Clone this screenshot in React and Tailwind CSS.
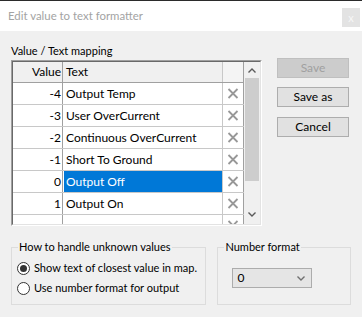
import React from "react";

const rows = [
  { v: "-4", t: "Output Temp" },
  { v: "-3", t: "User OverCurrent" },
  { v: "-2", t: "Continuous OverCurrent" },
  { v: "-1", t: "Short To Ground" },
  { v: "0", t: "Output Off", sel: true },
  { v: "1", t: "Output On" },
  { v: "", t: "" },
];

function XIcon() {
  return (
    <svg width="12" height="11" viewBox="0 0 12 11">
      <path d="M1.5 1 L10.5 10 M10.5 1 L1.5 10" stroke="#989898" strokeWidth="1.8" fill="none" />
    </svg>
  );
}

function Chevron({ up, color = "#5a5a5a" }) {
  return (
    <svg width="8" height="5" viewBox="0 0 8 5">
      <path d={up ? "M0.5 4.5 L4 1 L7.5 4.5" : "M0.5 0.5 L4 4 L7.5 0.5"} stroke={color} strokeWidth="1.4" fill="none" />
    </svg>
  );
}

export default function App() {
  return (
    <div className="w-[362px] h-[317px] overflow-hidden bg-[#f0f0f0] border-t border-[#2b2b2b] font-['Lato',sans-serif] text-[11px] text-black whitespace-nowrap">
      {/* Title bar */}
      <div className="h-[30px] bg-white flex justify-between pl-[8px] pr-[2px]">
        <div className="text-[#a3a3a3] text-[11.4px] leading-[30px]">Edit value to text formatter</div>
        <div className="mt-[7px] w-[18px] h-[19px] bg-[#e3e3e3] flex items-center justify-center text-[#f7f7f7] text-[11px] leading-none">x</div>
      </div>

      {/* Body */}
      <div className="px-[11px] pt-[12px]">
        <div className="flex gap-[15px]">
          <div className="w-[251px]">
            <div className="h-[16px] leading-[16px] mb-[1px]">Value / Text mapping</div>
            <div className="h-[166px] border-t border-l border-[#a0a0a0] border-b border-r border-b-white border-r-white">
              <div className="h-full flex border-t border-l border-[#696969] border-b border-r border-b-[#e3e3e3] border-r-[#e3e3e3] bg-white overflow-hidden text-[12px]">
                <div className="w-[231px] flex flex-col">
                  <div className="h-[21px] flex shrink-0 border-b border-[#a0a0a0] bg-[#f0f0f0]">
                    <div className="w-[50px] border-r border-[#a0a0a0] text-right pr-[1px] leading-[20px]">Value</div>
                    <div className="w-[160px] border-r border-[#c8c8c8] pl-[3px] leading-[20px]">Text</div>
                    <div className="w-[21px] border-r border-[#a0a0a0] bg-[#f4f4f4]"></div>
                  </div>
                  {rows.map((r, i) => (
                    <div key={i} className="h-[22px] flex shrink-0 border-b border-[#c8c8c8]">
                      <div className="w-[50px] border-r border-[#a0a0a0] text-right pr-[1px] leading-[21px]">{r.v}</div>
                      <div className="w-[160px] border-r border-[#c8c8c8]">
                        {r.sel ? (
                          <div className="ml-[1px] h-full bg-[#0078d7] text-white pl-[2px] leading-[21px]">{r.t}</div>
                        ) : (
                          <div className="pl-[3px] leading-[21px]">{r.t}</div>
                        )}
                      </div>
                      <div className="w-[21px] border-r border-[#a0a0a0] flex items-center justify-center">
                        <XIcon />
                      </div>
                    </div>
                  ))}
                </div>
                <div className="w-[16px] bg-[#f0f0f0] flex flex-col">
                  <div className="h-[16px] flex items-center justify-center">
                    <Chevron up />
                  </div>
                  <div className="h-[103px] mx-[1px] bg-[#cdcdcd]"></div>
                  <div className="flex-1 flex items-end justify-center pb-[7px]">
                    <Chevron />
                  </div>
                </div>
              </div>
            </div>
          </div>

          <div className="w-[72px] pt-[15px] flex flex-col text-[12px]">
            <div className="h-[20px] border border-[#bfbfbf] bg-[#cccccc] text-[#a0a0a0] text-center leading-[18px]">Save</div>
            <div className="mt-[9px] h-[20px] border border-[#adadad] bg-[#e1e1e1] text-center leading-[18px]">Save as</div>
            <div className="mt-[10px] h-[20px] border border-[#adadad] bg-[#e1e1e1] text-center leading-[18px]">Cancel</div>
          </div>
        </div>

        {/* Groups */}
        <div className="mt-[13px] flex gap-[11px]">
          <fieldset className="w-[196px] h-[66px] border border-[#dcdcdc]">
            <legend className="ml-[6px] px-[1px] leading-[16px]">How to handle unknown values</legend>
            <div className="pt-[3px] pl-[5px]">
              <div className="h-[20px] flex items-center gap-[4px]">
                <div className="w-[13px] h-[13px] rounded-full border border-[#333] bg-white flex items-center justify-center">
                  <div className="w-[7px] h-[7px] rounded-full bg-[#333]"></div>
                </div>
                <span>Show text of closest value in map.</span>
              </div>
              <div className="h-[20px] flex items-center gap-[4px]">
                <div className="w-[13px] h-[13px] rounded-full border border-[#333] bg-white"></div>
                <span>Use number format for output</span>
              </div>
            </div>
          </fieldset>
          <fieldset className="w-[134px] h-[66px] border border-[#dcdcdc]">
            <legend className="ml-[6px] px-[1px] leading-[16px]">Number format</legend>
            <div className="mt-[13px] ml-[14px] w-[80px] h-[20px] border border-[#acacac] bg-[#e5e5e5] flex items-center justify-between pl-[4px] pr-[6px]">
              <span className="leading-[18px] text-[12px]">0</span>
              <Chevron color="#707070" />
            </div>
          </fieldset>
        </div>
      </div>
    </div>
  );
}
